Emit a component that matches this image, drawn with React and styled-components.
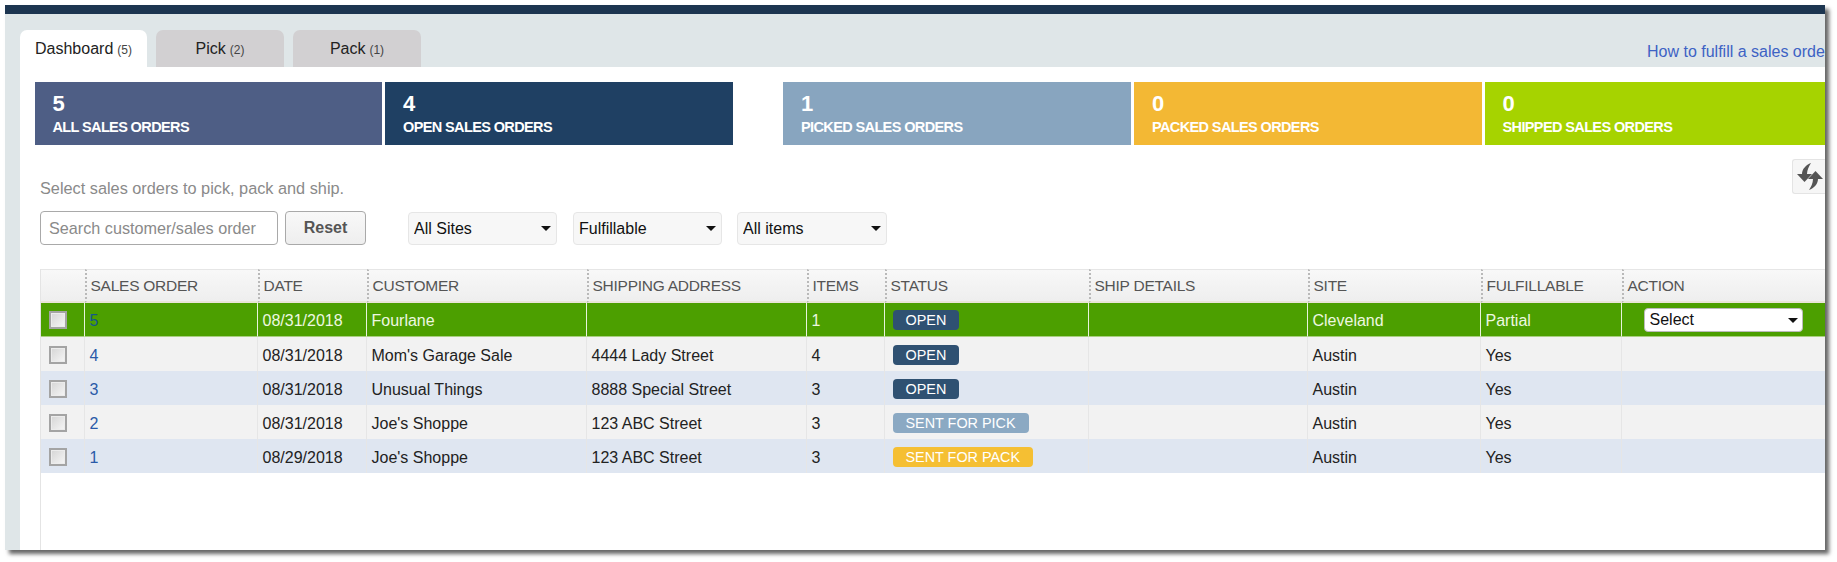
import React from "react";
import styled, { createGlobalStyle } from "styled-components";

const Global = createGlobalStyle`
  html { overflow: hidden; background: #fff; }
  html, body { margin: 0; padding: 0; height: 562px; }
  body { box-sizing: border-box; padding-top: 5px; font-family: "Liberation Sans", Arial, sans-serif; color: #222; }
`;

const Frame = styled.div`
  position: relative;
  width: 1820px;
  height: 545px;
  margin-left: 5px;
  background: #dfe6e8;
  box-shadow: 4px 4px 4px rgba(0, 0, 0, 0.6);
  overflow: hidden;
  display: flex;
  flex-direction: column;
`;
const TopBar = styled.div`
  height: 9px;
  flex: none;
  background: #1c3550;
`;
const TabBand = styled.div`
  height: 53px;
  flex: none;
  box-sizing: border-box;
  padding: 16px 0 0 15px;
  display: flex;
  gap: 9px;
  white-space: nowrap;
`;
const Tab = styled.div`
  width: ${(p) => (p.$active ? 127 : 128)}px;
  height: 37px;
  flex: none;
  display: flex;
  align-items: center;
  justify-content: center;
  gap: 4px;
  border-radius: 7px 7px 0 0;
  background: ${(p) => (p.$active ? "#fff" : "#d2d0d2")};
  font-size: 16px;
  color: #222;
`;
const TabCount = styled.span`
  font-size: 12px;
  color: #444;
  margin-top: 2px;
`;
const HelpLink = styled.a`
  margin: 12px 0 0 1217px;
  flex: none;
  font-size: 16px;
  line-height: 20px;
  color: #3d62c4;
`;
const Panel = styled.div`
  flex: 1;
  min-height: 0;
  margin-left: 15px;
  background: #fff;
  display: flex;
  flex-direction: column;
`;
const StatRow = styled.div`
  margin: 15px 0 0 14.5px;
  display: flex;
  height: 63px;
  flex: none;
`;
const StatCard = styled.div`
  width: ${(p) => p.$w}px;
  margin-left: ${(p) => p.$gap}px;
  flex: none;
  box-sizing: border-box;
  padding: 11px 0 0 18px;
  background: ${(p) => p.$bg};
  color: #fff;
`;
const StatValue = styled.div`
  font-size: 22px;
  line-height: 22px;
  font-weight: 700;
`;
const StatLabel = styled.div`
  margin-top: 4px;
  font-size: 14.5px;
  line-height: 16px;
  font-weight: 700;
  letter-spacing: -0.62px;
  white-space: nowrap;
`;
const Toolbar = styled.div`
  flex: none;
  padding-left: 20px;
`;
const HelpRow = styled.div`
  margin-top: 14px;
  height: 38px;
  display: flex;
  justify-content: space-between;
`;
const HelpText = styled.div`
  align-self: flex-end;
  font-size: 16.3px;
  line-height: 18px;
  color: #8a8a8a;
`;
const RefreshButton = styled.button`
  width: 33px;
  height: 35px;
  padding: 0 0 0 4px;
  box-sizing: border-box;
  border: 1px solid #e4e4e4;
  border-right: none;
  border-radius: 3px 0 0 3px;
  background: #f6f6f6;
  display: flex;
  align-items: center;
`;
const Controls = styled.div`
  margin-top: 14px;
  height: 34px;
  display: flex;
  align-items: center;
`;
const SearchInput = styled.input`
  width: 238px;
  height: 34px;
  box-sizing: border-box;
  padding: 0 8px;
  border: 1px solid #a9a9a9;
  border-radius: 4px;
  font: 16.2px "Liberation Sans", Arial, sans-serif;
  &::placeholder { color: #8a8a8a; opacity: 1; }
`;
const ResetButton = styled.button`
  width: 81px;
  height: 34px;
  margin-left: 7px;
  border: 1px solid #a9a9a9;
  border-radius: 4px;
  background: linear-gradient(#f8f8f8, #eeeeee);
  font: 700 16px "Liberation Sans", Arial, sans-serif;
  color: #555;
`;
const SelectWrap = styled.div`
  position: relative;
  width: ${(p) => p.$w}px;
  height: ${(p) => p.$h}px;
  margin-left: ${(p) => p.$ml || 0}px;
  flex: none;
  &::after {
    content: "";
    position: absolute;
    right: ${(p) => p.$arrow || 6}px;
    top: 50%;
    margin-top: -2px;
    border-style: solid;
    border-width: 5px 5px 0 5px;
    border-color: #111 transparent transparent transparent;
    pointer-events: none;
  }
`;
const Select = styled.select`
  appearance: none;
  width: 100%;
  height: 100%;
  box-sizing: border-box;
  padding: 0 0 0 5px;
  border: 1px solid ${(p) => (p.$light ? "#bbb" : "#e6e6e6")};
  border-radius: 4px;
  background: ${(p) => (p.$light ? "#fff" : "#f7f7f7")};
  font: 16px "Liberation Sans", Arial, sans-serif;
  color: #111;
`;
const TableArea = styled.div`
  flex: 1;
  min-height: 0;
  margin: 24px 0 0 19.5px;
  border-left: 1px solid #e4e4e4;
`;
const Table = styled.table`
  width: 1785px;
  table-layout: fixed;
  border-collapse: separate;
  border-spacing: 0;
`;
const HeadCell = styled.th`
  height: 31px;
  padding: 0 0 0 4px;
  border-top: 1px solid #e6e6e6;
  border-bottom: 2px solid #e9e5d8;
  border-left: ${(p) => (p.$first ? "none" : "2px dotted #b9b9b9")};
  background: linear-gradient(#f8f8f8, #eeeeee);
  font-size: 15.5px;
  font-weight: 400;
  letter-spacing: -0.25px;
  text-align: left;
  color: #555;
  white-space: nowrap;
`;
const Row = styled.tr`
  background: ${(p) => p.$bg};
  color: ${(p) => p.$fg};
`;
const Cell = styled.td`
  height: 34px;
  box-sizing: border-box;
  padding: ${(p) => (p.$selected ? "2px 0 0 5px" : "4px 0 0 5px")};
  border-right: 1px solid ${(p) => (p.$selected ? "#e8f3dc" : "#e6e6e6")};
  border-bottom: ${(p) => (p.$selected ? "1px solid #a9cf80" : "none")};
  font-size: 16px;
  white-space: nowrap;
  &:last-child { border-right: none; }
`;
const CheckCell = styled(Cell)`
  padding: ${(p) => (p.$selected ? "0 0 0 8px" : "2px 0 0 8px")};
`;
const ActionCell = styled(Cell)`
  padding: 0 0 0 22px;
`;
const CheckBox = styled.span`
  display: block;
  width: 18px;
  height: 18px;
  box-sizing: border-box;
  border: 2px solid #a4a4a4;
  background: linear-gradient(135deg, #d5d5d5, #f6f6f6);
  box-shadow: inset 0 0 0 1px #ececec;
`;
const OrderLink = styled.a`
  color: ${(p) => (p.$selected ? "#14568f" : "#2a5aa8")};
`;
const Badge = styled.span`
  display: inline-block;
  height: 20px;
  margin: -3px 0 0 3px;
  padding: 0 13px;
  border-radius: 4px;
  background: ${(p) => p.$bg};
  color: #fff;
  font-size: 14.4px;
  line-height: 20px;
  vertical-align: middle;
`;

const RefreshIcon = () => (
  <svg width="26" height="28" viewBox="0 0 26 28" fill="#555" aria-hidden="true">
    <path d="M0 11h5c0-5 4-9 9-11-2 3-4 7-4 11h5l-7.5 8z" />
    <path d="M26 16h-5c0 5-4 9-9 11 2-3 4-7 4-11h-5l7.5-8z" />
  </svg>
);

const cols = [44, 173, 109, 220, 220, 78, 204, 219, 173, 141, 204];
const heads = ["", "SALES ORDER", "DATE", "CUSTOMER", "SHIPPING ADDRESS", "ITEMS", "STATUS", "SHIP DETAILS", "SITE", "FULFILLABLE", "ACTION"];
const statuses = {
  open: ["OPEN", "#2f5172"],
  pick: ["SENT FOR PICK", "#8ba9c3"],
  pack: ["SENT FOR PACK", "#f5bf33"],
};
const rows = [
  { id: 5, date: "08/31/2018", customer: "Fourlane", address: "", items: 1, status: "open", site: "Cleveland", ful: "Partial", selected: true },
  { id: 4, date: "08/31/2018", customer: "Mom's Garage Sale", address: "4444 Lady Street", items: 4, status: "open", site: "Austin", ful: "Yes" },
  { id: 3, date: "08/31/2018", customer: "Unusual Things", address: "8888 Special Street", items: 3, status: "open", site: "Austin", ful: "Yes" },
  { id: 2, date: "08/31/2018", customer: "Joe's Shoppe", address: "123 ABC Street", items: 3, status: "pick", site: "Austin", ful: "Yes" },
  { id: 1, date: "08/29/2018", customer: "Joe's Shoppe", address: "123 ABC Street", items: 3, status: "pack", site: "Austin", ful: "Yes" },
];
const stats = [
  { v: 5, l: "ALL SALES ORDERS", bg: "#4e5e85", w: 347.5, gap: 0 },
  { v: 4, l: "OPEN SALES ORDERS", bg: "#1f4063", w: 348, gap: 3 },
  { v: 1, l: "PICKED SALES ORDERS", bg: "#88a5bf", w: 348, gap: 50 },
  { v: 0, l: "PACKED SALES ORDERS", bg: "#f3b834", w: 348, gap: 3 },
  { v: 0, l: "SHIPPED SALES ORDERS", bg: "#a6d300", w: 341, gap: 2.5 },
];
const rowBg = (r, i) => (r.selected ? "#4c9f00" : i % 2 ? "#f2f2f2" : "#dfe6f1");

export default function App() {
  return (
    <>
      <Global />
      <Frame>
        <TopBar />
        <TabBand>
          <Tab $active>Dashboard <TabCount>(5)</TabCount></Tab>
          <Tab>Pick <TabCount>(2)</TabCount></Tab>
          <Tab>Pack <TabCount>(1)</TabCount></Tab>
          <HelpLink>How to fulfill a sales order</HelpLink>
        </TabBand>
        <Panel>
          <StatRow>
            {stats.map((s) => (
              <StatCard key={s.l} $bg={s.bg} $w={s.w} $gap={s.gap}>
                <StatValue>{s.v}</StatValue>
                <StatLabel>{s.l}</StatLabel>
              </StatCard>
            ))}
          </StatRow>
          <Toolbar>
            <HelpRow>
              <HelpText>Select sales orders to pick, pack and ship.</HelpText>
              <RefreshButton aria-label="Refresh"><RefreshIcon /></RefreshButton>
            </HelpRow>
            <Controls>
              <SearchInput placeholder="Search customer/sales order" />
              <ResetButton>Reset</ResetButton>
              <SelectWrap $w={149} $h={33} $ml={42}>
                <Select defaultValue="All Sites"><option>All Sites</option></Select>
              </SelectWrap>
              <SelectWrap $w={149} $h={33} $ml={16}>
                <Select defaultValue="Fulfillable"><option>Fulfillable</option></Select>
              </SelectWrap>
              <SelectWrap $w={150} $h={33} $ml={15}>
                <Select defaultValue="All items"><option>All items</option></Select>
              </SelectWrap>
            </Controls>
          </Toolbar>
          <TableArea>
            <Table>
              <colgroup>
                {cols.map((w, i) => <col key={i} style={{ width: w }} />)}
              </colgroup>
              <thead>
                <tr>
                  {heads.map((h, i) => <HeadCell key={i} $first={i === 0}>{h}</HeadCell>)}
                </tr>
              </thead>
              <tbody>
                {rows.map((r, i) => {
                  const sel = !!r.selected;
                  const [label, color] = statuses[r.status];
                  return (
                    <Row key={r.id} $bg={rowBg(r, i)} $fg={sel ? "#eef8e0" : "#222"}>
                      <CheckCell $selected={sel}><CheckBox /></CheckCell>
                      <Cell $selected={sel}><OrderLink $selected={sel}>{r.id}</OrderLink></Cell>
                      <Cell $selected={sel}>{r.date}</Cell>
                      <Cell $selected={sel}>{r.customer}</Cell>
                      <Cell $selected={sel}>{r.address}</Cell>
                      <Cell $selected={sel}>{r.items}</Cell>
                      <Cell $selected={sel}><Badge $bg={color}>{label}</Badge></Cell>
                      <Cell $selected={sel} />
                      <Cell $selected={sel}>{r.site}</Cell>
                      <Cell $selected={sel}>{r.ful}</Cell>
                      <ActionCell $selected={sel}>
                        {sel && (
                          <SelectWrap $w={159} $h={24} $arrow={5}>
                            <Select $light defaultValue="Select"><option>Select</option></Select>
                          </SelectWrap>
                        )}
                      </ActionCell>
                    </Row>
                  );
                })}
              </tbody>
            </Table>
          </TableArea>
        </Panel>
      </Frame>
    </>
  );
}
